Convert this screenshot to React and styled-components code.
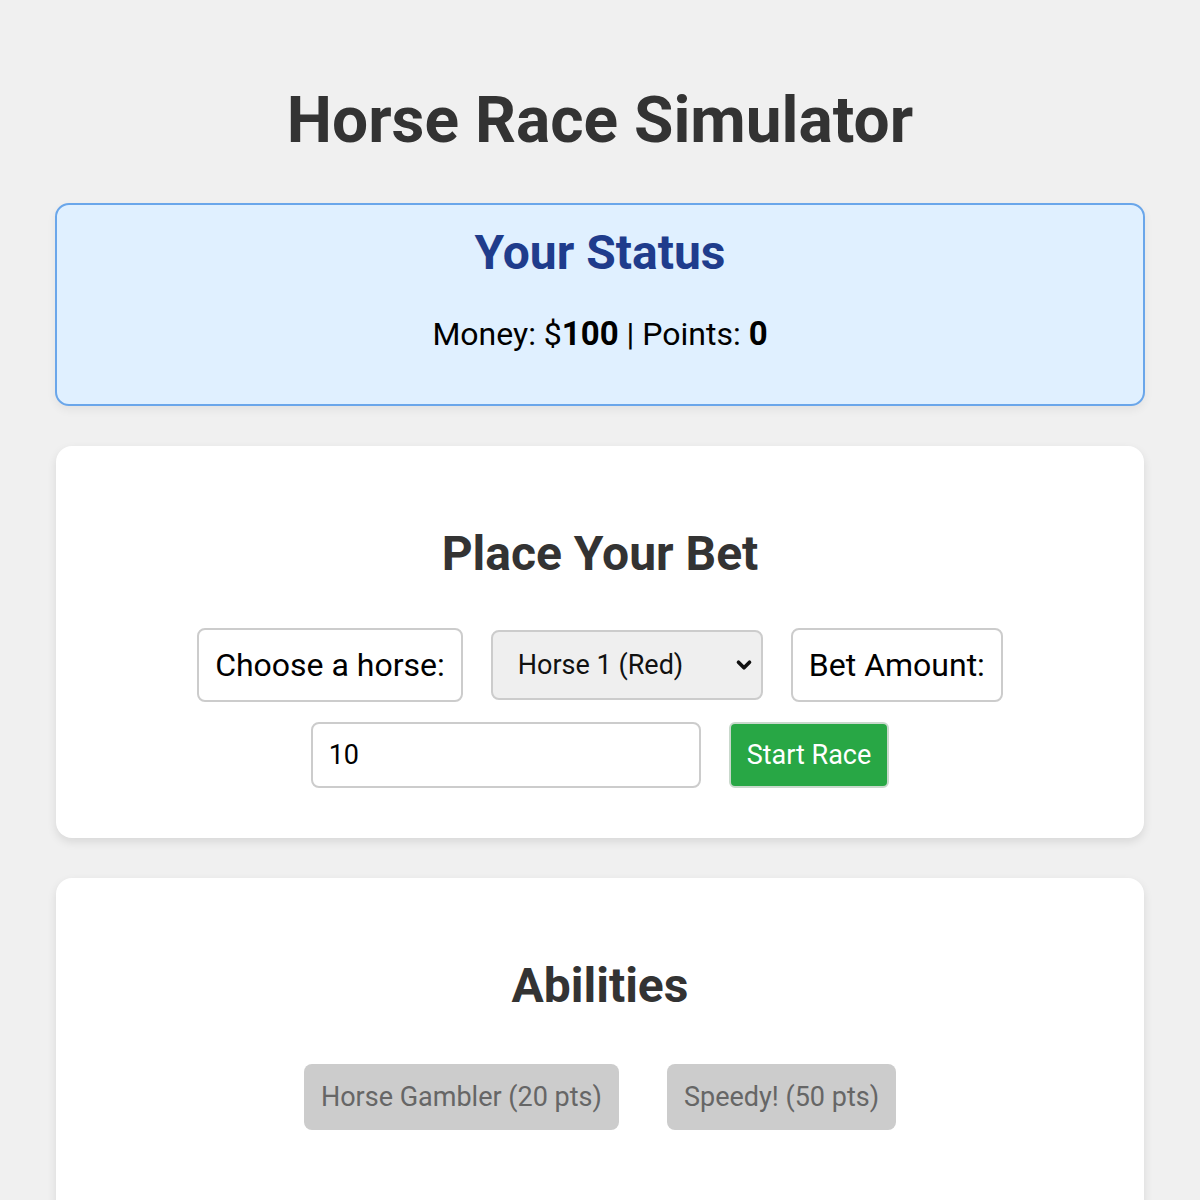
import React, { useState } from "react";
import styled, { createGlobalStyle } from "styled-components";
import { ChevronDown } from "lucide-react";

const GlobalStyle = createGlobalStyle`
  body {
    margin: 0;
    background-color: #f0f0f0;
    font-family: Roboto, "Liberation Sans", Arial, sans-serif;
    color: #000;
  }
`;

const App = () => {
  const [horse, setHorse] = useState("1");
  const [bet, setBet] = useState("10");
  const money = 100;
  const points = 0;

  return (
    <>
      <GlobalStyle />
      <Pagina>
        <Titulo>Horse Race Simulator</Titulo>

        <Estado>
          <EstadoTitulo>Your Status</EstadoTitulo>
          <EstadoTexto>
            Money: $<b>{money}</b> | Points: <b>{points}</b>
          </EstadoTexto>
        </Estado>

        <Tarjeta>
          <Subtitulo>Place Your Bet</Subtitulo>
          <Controles>
            <Etiqueta>Choose a horse:</Etiqueta>
            <SelectWrap>
              <Selector value={horse} onChange={(e) => setHorse(e.target.value)}>
                <option value="1">Horse 1 (Red)</option>
                <option value="2">Horse 2 (Blue)</option>
                <option value="3">Horse 3 (Green)</option>
              </Selector>
              <Flecha>
                <ChevronDown size={22} strokeWidth={4} />
              </Flecha>
            </SelectWrap>
            <Etiqueta>Bet Amount:</Etiqueta>
            <Entrada
              type="number"
              value={bet}
              onChange={(e) => setBet(e.target.value)}
            />
            <BotonCarrera>Start Race</BotonCarrera>
          </Controles>
        </Tarjeta>

        <Tarjeta $abajo={90}>
          <Subtitulo>Abilities</Subtitulo>
          <Habilidades>
            <BotonHabilidad disabled>Horse Gambler (20 pts)</BotonHabilidad>
            <BotonHabilidad disabled>Speedy! (50 pts)</BotonHabilidad>
          </Habilidades>
        </Tarjeta>
      </Pagina>
    </>
  );
};

export default App;

const Pagina = styled.div`
  padding: 40px 56px 60px;
  display: flex;
  flex-direction: column;
  gap: 40px;
`;
const Titulo = styled.h1`
  margin: 0 0 5px;
  padding-top: 43px;
  text-align: center;
  font-size: 64px;
  font-weight: bold;
  color: #333;
  line-height: 75px;
`;
const Estado = styled.div`
  margin: 0 -1px;
  background-color: #e0f0ff;
  border: 2px solid #6aa6ea;
  border-radius: 14px;
  padding: 20px 20px 51px;
  text-align: center;
  box-shadow: 0 4px 10px rgba(0, 0, 0, 0.06);
`;
const EstadoTitulo = styled.h2`
  margin: 0 0 34px;
  font-size: 48px;
  line-height: 56px;
  color: #1f3c8c;
`;
const EstadoTexto = styled.p`
  margin: 0;
  font-size: 32px;
  line-height: 38px;
  b {
    font-size: 33px;
  }
`;
const Tarjeta = styled.div`
  background-color: #fff;
  border-radius: 16px;
  padding: 40px 40px ${(p) => p.$abajo || 50}px;
  box-shadow: 0 4px 10px rgba(0, 0, 0, 0.1);
  text-align: center;
`;
const Subtitulo = styled.h2`
  margin: 40px 0 46px;
  font-size: 48px;
  line-height: 56px;
  color: #333;
`;
const Controles = styled.div`
  display: flex;
  flex-wrap: wrap;
  justify-content: center;
  align-items: center;
  gap: 20px 28px;
`;
const Etiqueta = styled.label`
  box-sizing: border-box;
  height: 74px;
  display: flex;
  align-items: center;
  padding: 0 16px;
  border: 2px solid #ccc;
  border-radius: 8px;
  font-size: 32px;
  background: #fff;
`;
const SelectWrap = styled.div`
  position: relative;
  width: 272px;
  height: 70px;
`;
const Selector = styled.select`
  appearance: none;
  box-sizing: border-box;
  width: 100%;
  height: 100%;
  padding: 0 0 0 25px;
  border: 2px solid #ccc;
  border-radius: 8px;
  background-color: #efefef;
  font-family: inherit;
  font-size: 27px;
  color: #111;
`;
const Flecha = styled.span`
  position: absolute;
  right: 8px;
  top: 50%;
  transform: translateY(-50%);
  display: flex;
  pointer-events: none;
  color: #111;
`;
const Entrada = styled.input`
  box-sizing: border-box;
  width: 390px;
  height: 66px;
  padding: 0 16px;
  border: 2px solid #ccc;
  border-radius: 8px;
  font-family: inherit;
  font-size: 27px;
  color: #000;
  -moz-appearance: textfield;
  &::-webkit-outer-spin-button,
  &::-webkit-inner-spin-button {
    -webkit-appearance: none;
    margin: 0;
  }
`;
const BotonCarrera = styled.button`
  box-sizing: border-box;
  height: 66px;
  padding: 0 16px;
  border: 2px solid #c9d9cc;
  border-radius: 6px;
  background-color: #28a745;
  color: #fff;
  font-family: inherit;
  font-size: 27px;
  cursor: pointer;
`;
const Habilidades = styled.div`
  display: flex;
  justify-content: center;
  gap: 48px;
  margin-top: 50px;
`;
const BotonHabilidad = styled.button`
  height: 66px;
  padding: 0 17px;
  border: none;
  border-radius: 8px;
  background-color: #ccc;
  color: #666;
  font-family: inherit;
  font-size: 27px;
`;
